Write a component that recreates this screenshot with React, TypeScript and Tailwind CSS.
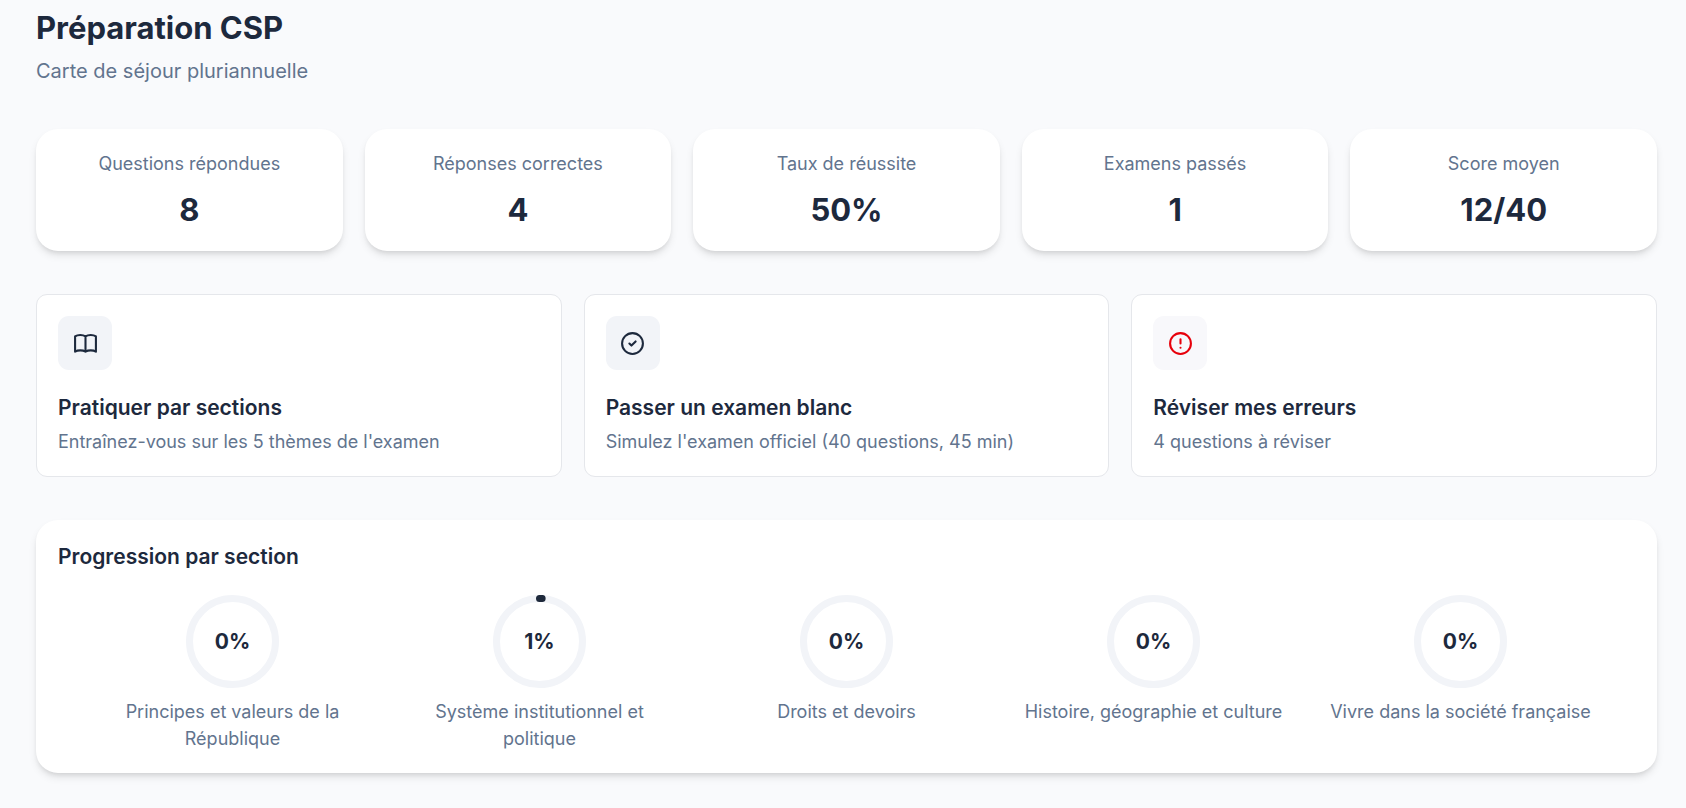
import type { ReactNode } from 'react'

const stats = [
  { label: 'Questions répondues', value: '8' },
  { label: 'Réponses correctes', value: '4' },
  { label: 'Taux de réussite', value: '50%' },
  { label: 'Examens passés', value: '1' },
  { label: 'Score moyen', value: '12/40' },
]

const sections = [
  { name: 'Principes et valeurs de la République', percent: 0 },
  { name: 'Système institutionnel et politique', percent: 1 },
  { name: 'Droits et devoirs', percent: 0 },
  { name: 'Histoire, géographie et culture', percent: 0 },
  { name: 'Vivre dans la société française', percent: 0 },
]

function Icon({ children }: { children: ReactNode }) {
  return (
    <svg
      viewBox="0 0 24 24"
      className="size-[25px]"
      fill="none"
      stroke="currentColor"
      strokeWidth="2"
      strokeLinecap="round"
      strokeLinejoin="round"
      aria-hidden="true"
    >
      {children}
    </svg>
  )
}

const actions = [
  {
    title: 'Pratiquer par sections',
    detail: "Entraînez-vous sur les 5 thèmes de l'examen",
    tone: 'bg-[#f2f4f8] text-slate-800',
    icon: (
      <Icon>
        <path d="M12 5.200C10.700 4.300 9 3.900 7 3.900S3.300 4.300 2 5.200V19.800C3.300 19 5 18.600 7 18.600S10.700 19 12 19.800C13.300 19 15 18.600 17 18.600S20.700 19 22 19.800V5.200C20.700 4.300 19 3.900 17 3.900S13.300 4.300 12 5.200V19.800" />
      </Icon>
    ),
  },
  {
    title: 'Passer un examen blanc',
    detail: "Simulez l'examen officiel (40 questions, 45 min)",
    tone: 'bg-[#f2f4f8] text-slate-800',
    icon: (
      <Icon>
        <circle cx="12" cy="12" r="10" />
        <path d="m9 12 2 2 4-4" />
      </Icon>
    ),
  },
  {
    title: 'Réviser mes erreurs',
    detail: '4 questions à réviser',
    tone: 'bg-[#f8f8fb] text-[#e7000b]',
    icon: (
      <Icon>
        <circle cx="12" cy="12" r="10" />
        <path d="M12 8v4M12 16h.01" />
      </Icon>
    ),
  },
]

const RADIUS = 43
const CIRCUMFERENCE = 2 * Math.PI * RADIUS

function ProgressRing({ percent }: { percent: number }) {
  return (
    <div className="relative size-[93px]">
      <svg viewBox="0 0 93 93" className="size-full -rotate-90" fill="none" strokeWidth="7" aria-hidden="true">
        <circle cx="46.5" cy="46.5" r={RADIUS} stroke="#f2f4f8" />
        {percent > 0 && (
          <circle
            cx="46.5"
            cy="46.5"
            r={RADIUS}
            stroke="#1e293b"
            strokeLinecap="round"
            strokeDasharray={CIRCUMFERENCE}
            strokeDashoffset={CIRCUMFERENCE * (1 - percent / 100)}
          />
        )}
      </svg>
      <span className="absolute inset-0 flex items-center justify-center text-[21px] font-bold">
        {percent}%
      </span>
    </div>
  )
}

export default function App() {
  return (
    <main className="min-h-screen bg-[#f9fafc] pr-[29px] pb-8 pl-9 font-['Inter',sans-serif] text-slate-800">
      <header className="pt-2">
        <h1 className="text-[31px] leading-10 font-bold">Préparation CSP</h1>
        <p className="mt-2 text-[20px] leading-[30px] text-slate-500">Carte de séjour pluriannuelle</p>
      </header>

      <section aria-label="Statistiques" className="mt-[43px] grid grid-cols-5 gap-[22px]">
        {stats.map((stat) => (
          <div
            key={stat.label}
            className="rounded-[22px] bg-white p-[21px] text-center shadow-[0_5px_8px_-1px_rgba(0,0,0,0.1),0_3px_5px_-2px_rgba(0,0,0,0.1)]"
          >
            <p className="text-[18px] leading-7 text-slate-500">{stat.label}</p>
            <p className="mt-3 text-[31px] leading-10 font-bold">{stat.value}</p>
          </div>
        ))}
      </section>

      <nav aria-label="Activités" className="mt-[43px] grid grid-cols-3 gap-[22px]">
        {actions.map((action) => (
          <a
            key={action.title}
            href="#"
            className="rounded-[11px] border border-gray-200 bg-white p-[21px]"
          >
            <div className={`flex size-[54px] items-center justify-center rounded-[11px] ${action.tone}`}>
              {action.icon}
            </div>
            <h2 className="mt-[22px] text-[21px] leading-8 font-semibold">{action.title}</h2>
            <p className="mt-1 text-[18px] leading-[27px] text-slate-500">{action.detail}</p>
          </a>
        ))}
      </nav>

      <section
        aria-labelledby="progress-heading"
        className="mt-[43px] rounded-[22px] bg-white px-[22px] py-[21px] shadow-[0_5px_8px_-1px_rgba(0,0,0,0.1),0_3px_5px_-2px_rgba(0,0,0,0.1)]"
      >
        <h2 id="progress-heading" className="text-[21px] leading-8 font-semibold">
          Progression par section
        </h2>
        <ul className="mt-[22px] grid grid-cols-5 gap-[22px] px-8">
          {sections.map((section) => (
            <li key={section.name} className="flex flex-col items-center">
              <ProgressRing percent={section.percent} />
              <p className="mt-[10px] text-center text-[18px] leading-[27px] text-slate-500">{section.name}</p>
            </li>
          ))}
        </ul>
      </section>
    </main>
  )
}
